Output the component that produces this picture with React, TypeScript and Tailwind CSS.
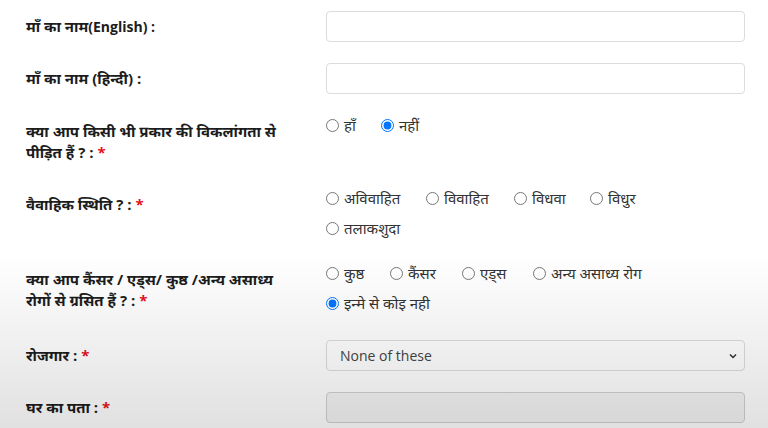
import React from 'react';

const font = { fontFamily: '"Open Sans", "Noto Sans Devanagari", "Noto Sans", sans-serif' };

type Opt = { label: string; w: string; checked?: boolean };

const disability: Opt[][] = [
  [
    { label: "हाँ", w: "w-[55px]" },
    { label: "नहीं", w: "w-[60px]", checked: true }
  ]
];

const marital: Opt[][] = [
  [
    { label: "अविवाहित", w: "w-[100px]" },
    { label: "विवाहित", w: "w-[88px]" },
    { label: "विधवा", w: "w-[76px]" },
    { label: "विधुर", w: "w-[60px]" }
  ],
  [{ label: "तलाकशुदा", w: "w-[100px]" }]
];

const disease: Opt[][] = [
  [
    { label: "कुष्ठ", w: "w-[64px]" },
    { label: "कैंसर", w: "w-[72px]" },
    { label: "एड्स", w: "w-[71px]" },
    { label: "अन्य असाध्य रोग", w: "w-[130px]" }
  ],
  [{ label: "इन्मे से कोइ नही", w: "w-[130px]", checked: true }]
];

const Star = () => <span className="text-[#e3121b] ml-1">*</span>;

const Label = ({ children, pad }: { children: React.ReactNode; pad?: boolean }) => (
  <div className={`w-[326px] shrink-0 pl-[26px] pr-[38px] text-[15px] font-bold leading-[21px] text-[#1c1c1c] ${pad ? 'pt-[7px]' : ''}`}>
    {children}
  </div>
);

const TextBox = () => (
  <div className="h-[31px] w-full rounded-[4px] border border-[#dcdcdc] bg-white" />
);

const Radios = ({ name, lines }: { name: string; lines: Opt[][] }) => (
  <div className="flex flex-col gap-[8px]">
    {lines.map((line, i) => (
      <div key={i} className="flex h-[22px] items-center">
        {line.map((o) => (
          <label key={o.label} className={`flex items-center ${o.w} text-[15px] text-[#333]`}>
            <input
              type="radio"
              name={name}
              defaultChecked={o.checked}
              className="m-0 h-[13px] w-[13px] shrink-0"
            />
            <span className="ml-[5px] whitespace-nowrap">{o.label}</span>
          </label>
        ))}
      </div>
    ))}
  </div>
);

const App = () => {
  return (
    <div className="relative h-[428px] w-[768px] overflow-hidden bg-white" style={font}>
      <div className="pt-[11px] pr-[23px]">
        {/* mother's name english */}
        <div className="mb-[21px] flex items-center">
          <Label>
            माँ का नाम<span className="text-[14px]">(English) :</span>
          </Label>
          <TextBox />
        </div>

        {/* mother's name hindi */}
        <div className="mb-[20px] flex items-center">
          <Label>माँ का नाम (हिन्दी) :</Label>
          <TextBox />
        </div>

        {/* disability */}
        <div className="mb-[24px] flex items-start">
          <Label pad>
            क्या आप किसी भी प्रकार की विकलांगता से पीड़ित हैं ? :<Star />
          </Label>
          <Radios name="disability" lines={disability} />
        </div>

        {/* marital status */}
        <div className="mb-[23px] flex items-start">
          <Label pad>
            वैवाहिक स्थिति ? :<Star />
          </Label>
          <Radios name="marital" lines={marital} />
        </div>

        {/* disease */}
        <div className="mb-[26px] flex items-start">
          <Label pad>
            क्या आप कैंसर / एड्स/ कुष्ठ /अन्य असाध्य रोगों से ग्रसित हैं ? :<Star />
          </Label>
          <Radios name="disease" lines={disease} />
        </div>

        {/* employment */}
        <div className="mb-[21px] flex items-center">
          <Label>
            रोजगार :<Star />
          </Label>
          <div className="flex h-[31px] w-full items-center justify-between rounded-[4px] border border-[#dcdcdc] bg-white pl-[13px] pr-[6px] text-[14px] text-[#444]">
            <span>None of these</span>
            <svg width="10" height="10" viewBox="0 0 10 10" fill="none" stroke="#333" strokeWidth="1.5">
              <path d="M2 3.5l3 3 3-3" />
            </svg>
          </div>
        </div>

        {/* address */}
        <div className="flex items-center">
          <Label>
            घर का पता :<Star />
          </Label>
          <div className="h-[31px] w-full rounded-[4px] border border-[#d0d0d0] bg-[#f4f4f4]" />
        </div>
      </div>

      {/* video shade overlay */}
      <div className="pointer-events-none absolute inset-x-0 top-[255px] bottom-0 bg-gradient-to-b from-transparent to-black/[0.12]" />
    </div>
  );
};

export default App;
